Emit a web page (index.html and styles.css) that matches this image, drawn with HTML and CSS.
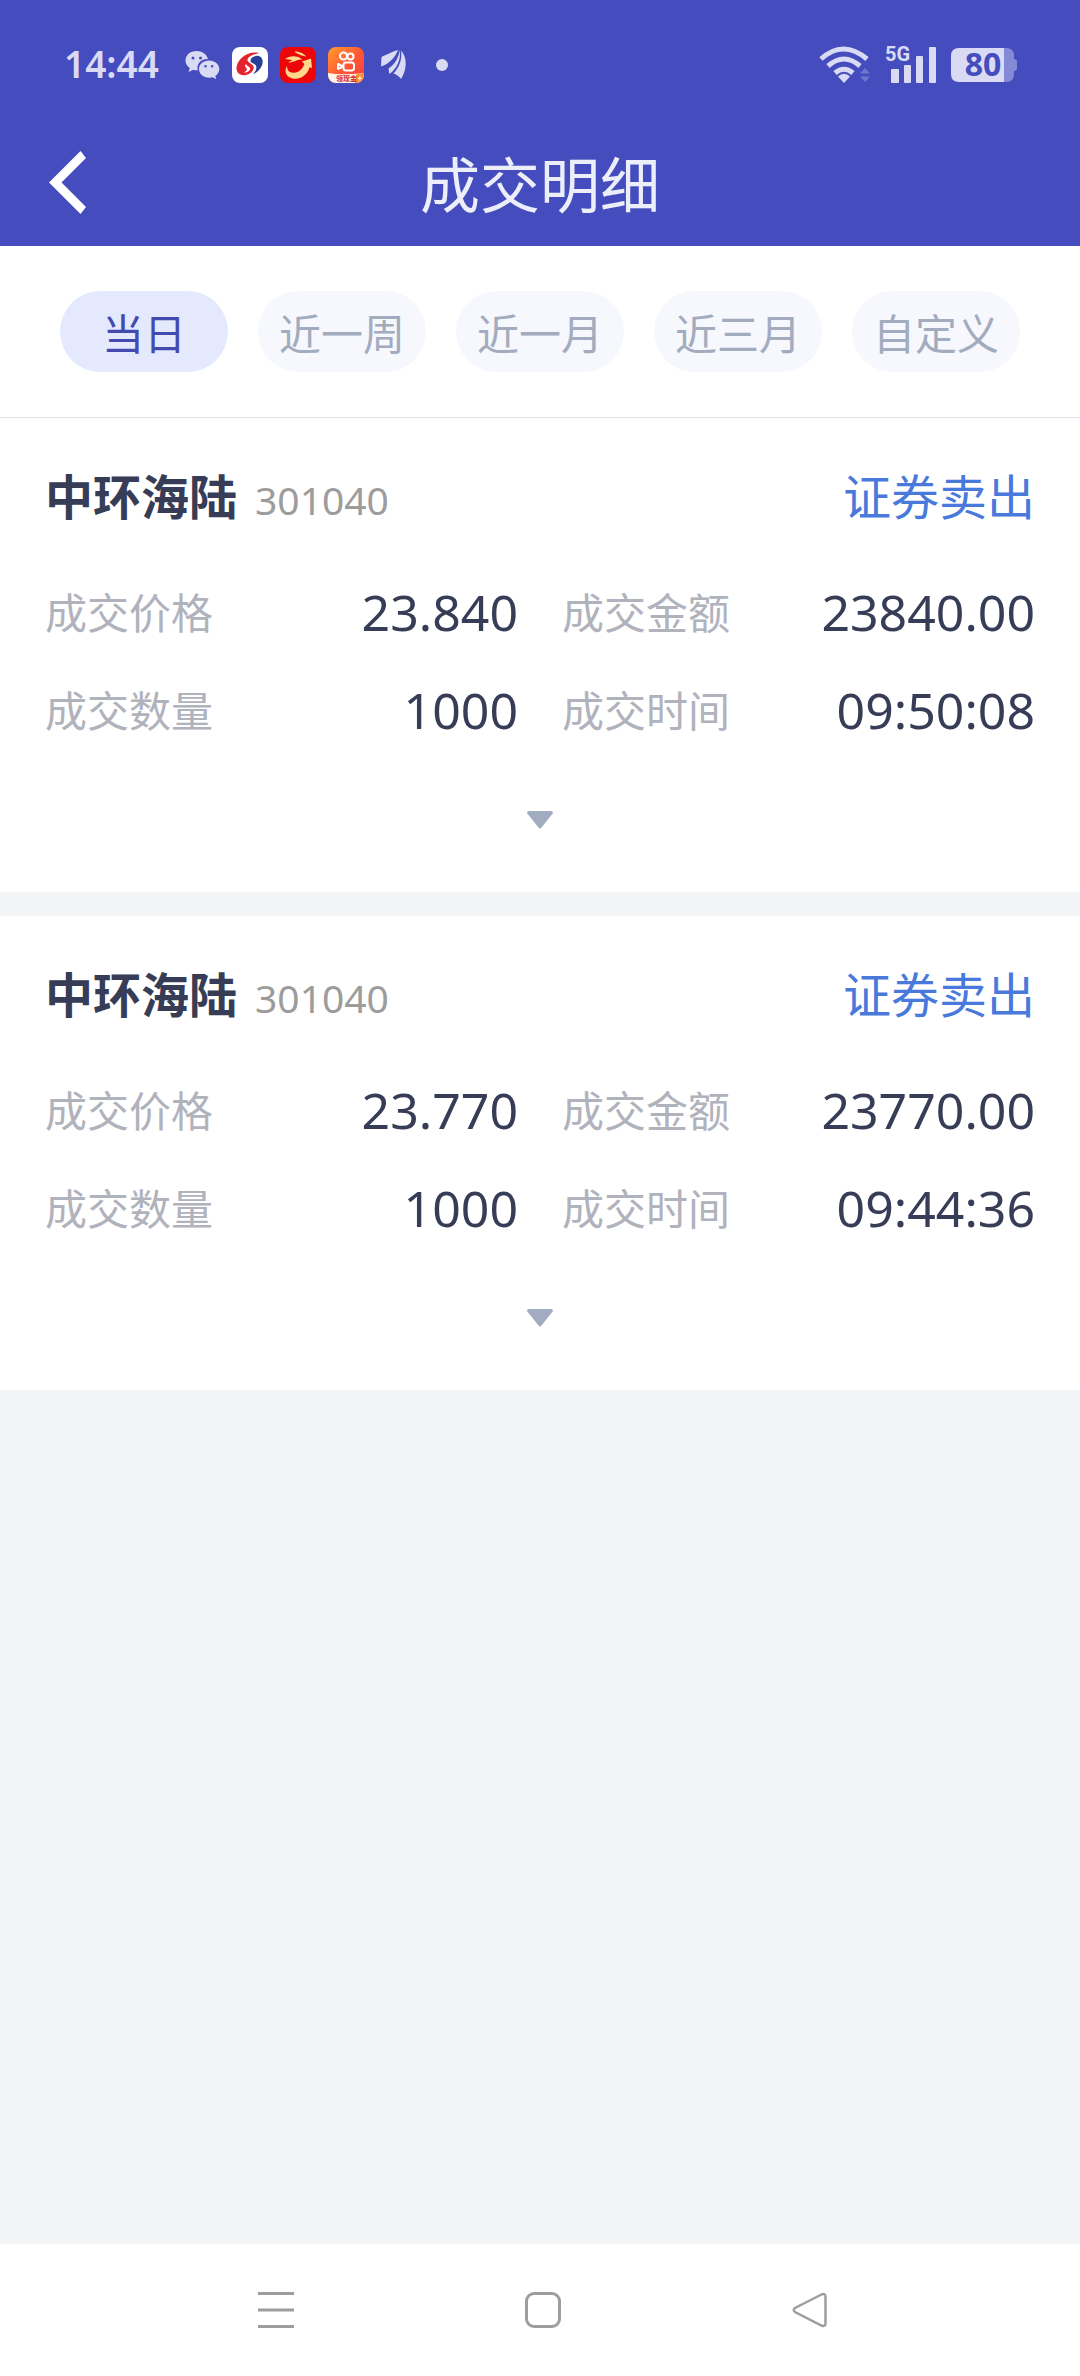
FILE: index.html
```html
<!DOCTYPE html>
<html lang="zh-CN">
<head>
<meta charset="utf-8">
<meta name="viewport" content="width=device-width">
<title>成交明细</title>
<link rel="stylesheet" href="styles.css">
</head>
<body>
<header class="header">
  <div class="status">
    <div class="status-left">
      <span class="clock">14:44</span>
      <svg class="wechat" width="35" height="30" viewBox="0 0 35 30" aria-hidden="true">
        <path fill="#d9dbf4" fill-rule="evenodd" d="M11.500 1C5 1 .5 5.200.5 10.600c0 3.200 1.600 5.700 4.300 7.500L3.600 22l4.600-2.300c1.500.4 3 .6 4.500.5C11.200 13 17 8.600 23 9 21.800 4 17 1 11.500 1zM8 6.500a1.500 1.500 0 1 1 0 3 1.500 1.500 0 0 1 0-3zm7.500 0a1.500 1.500 0 1 1 0 3 1.500 1.500 0 0 1 0-3z"/>
        <path fill="#d9dbf4" fill-rule="evenodd" d="M24 10.500c-5.700 0-10 3.900-10 8.600 0 5 4.600 8.700 10 8.700 1.300 0 2.500-.2 3.700-.5l3.500 2-.9-3.300c2.500-1.700 4-4.100 4-6.900 0-4.800-4.500-8.600-10.300-8.600zM20.500 15a1.300 1.300 0 1 1 0 2.600 1.300 1.300 0 0 1 0-2.600zm6.600 0a1.300 1.300 0 1 1 0 2.600 1.300 1.300 0 0 1 0-2.600z"/>
      </svg>
      <svg class="app" width="36" height="36" viewBox="0 0 36 36" aria-hidden="true">
        <rect width="36" height="36" rx="8" fill="#fff"/>
        <path fill="#e3242f" d="M27 6C16 3.500 5 12 4.500 21c-.2 5 4 8.300 9.500 7 5-1.200 8.500-5 7.500-8.500-.7-2.300-3.500-3-5.500-5-1.600-1.800.5-4.600 3.500-6 2.700-1.300 5.300-1.500 7.500-2.500zM14 17c1 2.500 4.500 2.600 4.200 5-.4 2-3.400 3.700-6.200 3.500 2.500-1.500 4-3.500 1.500-5.500-1-1-.5-2 .5-3z"/>
        <path fill="#273f96" d="M19.500 11c3-2.500 7.500-3 9.700-.5 3.800 4.500-.2 13.500-7.700 16.500 2.600-3.500 3.700-6.500 2.200-8.800-1.500-2-4.500-2.200-5.400-4 .3-1.200.6-2.200 1.200-3.200z"/>
      </svg>
      <svg class="app" width="36" height="36" viewBox="0 0 36 36" aria-hidden="true">
        <rect width="36" height="36" rx="8" fill="#ec0609"/>
        <path fill="#ffd98a" d="M14.500 4.500c4.500.2 9 1.200 11.500 5-3.500-1-8-1.500-11.500-5zM5 12c5-3.500 12-4 18 .7C17 12 14 16 8 15.300 10 14.700 11 14 12 13.300 10 12.500 7.500 12.500 5 12z"/>
        <path fill="#ffd98a" d="m22 14.500 9-3 1 9.500-2.500-.8C27.500 28 20 33 12.500 31.500c-6-1.200-9-7-5.500-12.500 0 4.500 2.500 7 7 6.700C19 25.500 22.500 22 24.500 17z"/>
      </svg>
      <svg class="app" width="36" height="36" viewBox="0 0 36 36" aria-hidden="true">
        <defs>
          <linearGradient id="ks" x1="0" y1="0" x2="1" y2="1"><stop offset="0" stop-color="#ff9f2e"/><stop offset=".5" stop-color="#ff5a35"/><stop offset="1" stop-color="#f63a45"/></linearGradient>
          <clipPath id="ksclip"><rect width="36" height="36" rx="8"/></clipPath>
        </defs>
        <g clip-path="url(#ksclip)">
          <rect width="36" height="36" fill="url(#ks)"/>
          <path fill="#fff4e8" d="M0 26q14 2.500 36 0v10H0z"/>
          <path fill="#ff8b28" d="M28 27.500 36 26v10h-9z"/>
          <path fill="#fff" d="m32.500 28-3 4h2l-1.500 3 4-4.500h-2z"/>
        </g>
        <g fill="none" stroke="#fff" stroke-width="2"><circle cx="15.500" cy="9" r="3.500"/><circle cx="22.500" cy="9.500" r="3"/><rect x="15.500" y="15.500" width="10.500" height="8" rx="2.500"/><path d="m15 19.500-5-2.500v5z" stroke-linejoin="round"/></g>
        <text class="app-tag" x="8" y="34">领现金</text>
      </svg>
      <svg class="wing" width="28" height="32" viewBox="0 0 28 32" aria-hidden="true">
        <path fill="#d9dbf4" d="M18 1C11 3 5 6.500 1.500 8L1 17.500C8 15.500 15 9 18 1zM19.500 1C19 9 14 16 8.500 19.500l.8 5.500C17 20 21.500 9.500 19.500 1zM21 1.500c1.500 9-2 17-7.500 23 2.500.8 5.500 2.500 7.500 5.500C26.500 22 28 8.500 21 1.500z"/>
      </svg>
      <span class="dot"></span>
    </div>
    <div class="status-right">
      <svg width="54" height="38" viewBox="0 0 54 38" aria-hidden="true">
        <g fill="none" stroke="#d9dbf4" stroke-width="5"><path d="M2 13q22-20 46 0"/><path d="M9 20q16-14 32 0"/><path d="M16 27q9-7.500 18 0"/></g>
        <path fill="#d9dbf4" d="M25 37l-6-6.500q6-5.500 12 0z"/>
        <path fill="#7177cf" d="m46 22 5 5.500H41zM46 36l5-5.500H41z"/>
      </svg>
      <svg width="54" height="48" viewBox="0 -5 54 48" aria-hidden="true">
        <text class="net" x="0" y="15">5G</text>
        <g fill="#d9dbf4"><rect x="6" y="23" width="8" height="14" rx="1"/><rect x="19" y="19" width="7" height="18" rx="1"/><rect x="31" y="10" width="7" height="27" rx="1"/><rect x="44" y="1" width="7" height="36" rx="1"/></g>
      </svg>
      <svg width="66" height="54" viewBox="0 -10 66 54" aria-hidden="true">
        <path fill="#858ad6" d="M53 0h2q8 0 8 8v3q3 0 3 3v6q0 3-3 3v3q0 8-8 8h-2z"/>
        <path fill="#d9dbf4" d="M8 0h45v34H8q-8 0-8-8V8q0-8 8-8z"/>
        <text class="charge" x="32" y="28">80</text>
      </svg>
    </div>
  </div>
  <div class="titlebar">
    <button class="back" type="button" aria-label="返回">
      <svg width="38" height="64" viewBox="0 0 38 64" aria-hidden="true"><path fill="#fff" d="M31.500 0 37 7 12.500 31.500 37 56l-5.500 7L0 31.500z"/></svg>
    </button>
    <h1 class="title">成交明细</h1>
  </div>
</header>

<nav class="filters" aria-label="日期范围">
  <button class="chip chip-active" type="button" aria-pressed="true">当日</button>
  <button class="chip" type="button">近一周</button>
  <button class="chip" type="button">近一月</button>
  <button class="chip" type="button">近三月</button>
  <button class="chip" type="button">自定义</button>
</nav>

<main class="list">
  <article class="card">
    <div class="card-head">
      <h2 class="name">中环海陆</h2><span class="code">301040</span><span class="side">证券卖出</span>
    </div>
    <dl class="fields">
      <div class="field"><dt>成交价格</dt><dd>23.840</dd></div>
      <div class="field"><dt>成交金额</dt><dd>23840.00</dd></div>
      <div class="field"><dt>成交数量</dt><dd>1000</dd></div>
      <div class="field"><dt>成交时间</dt><dd>09:50:08</dd></div>
    </dl>
    <button class="expand" type="button" aria-label="展开">
      <svg width="26" height="18" viewBox="0 0 26 18" aria-hidden="true"><path fill="#a2acc0" d="M1.500 0h23q2.500 1 .8 3L14.500 16.500q-1.500 1.800-3 0L.7 3Q-1 1 1.500 0z"/></svg>
    </button>
  </article>
  <article class="card">
    <div class="card-head">
      <h2 class="name">中环海陆</h2><span class="code">301040</span><span class="side">证券卖出</span>
    </div>
    <dl class="fields">
      <div class="field"><dt>成交价格</dt><dd>23.770</dd></div>
      <div class="field"><dt>成交金额</dt><dd>23770.00</dd></div>
      <div class="field"><dt>成交数量</dt><dd>1000</dd></div>
      <div class="field"><dt>成交时间</dt><dd>09:44:36</dd></div>
    </dl>
    <button class="expand" type="button" aria-label="展开">
      <svg width="26" height="18" viewBox="0 0 26 18" aria-hidden="true"><path fill="#a2acc0" d="M1.500 0h23q2.500 1 .8 3L14.500 16.500q-1.500 1.800-3 0L.7 3Q-1 1 1.500 0z"/></svg>
    </button>
  </article>
</main>

<nav class="system-nav" aria-label="系统导航">
  <button type="button" aria-label="最近任务">
    <svg width="36" height="36" viewBox="0 0 36 36" aria-hidden="true"><path stroke="#9e9e9e" stroke-width="3" d="M0 1.500h36M0 18h36M0 34.500h36"/></svg>
  </button>
  <button type="button" aria-label="主屏幕">
    <svg width="36" height="36" viewBox="0 0 36 36" aria-hidden="true"><rect x="1.500" y="1.500" width="33" height="33" rx="7.500" fill="none" stroke="#9e9e9e" stroke-width="3"/></svg>
  </button>
  <button type="button" aria-label="返回">
    <svg width="36" height="36" viewBox="0 0 36 36" aria-hidden="true"><path fill="none" stroke="#9e9e9e" stroke-width="2.500" d="M29.500 2.500 3 16q-2.500 2 0 4l26.500 13.500q4 1.500 4-2V4.500q0-3.500-4-2z"/></svg>
  </button>
</nav>
</body>
</html>
```
FILE: styles.css
```css
* {
  box-sizing: border-box;
}

body {
  margin: 0;
  min-height: 100vh;
  display: flex;
  flex-direction: column;
  background: #f3f4f6;
  color: #373d56;
  font-family: "Noto Sans", "Noto Sans CJK SC", sans-serif;
}

button {
  padding: 0;
  border: 0;
  background: none;
  color: inherit;
  font: inherit;
}

svg {
  display: block;
  flex: none;
}

h1,
h2,
dl,
dd {
  margin: 0;
}

.header {
  background: #444cbe;
}

.status {
  display: flex;
  justify-content: space-between;
  align-items: center;
  height: 126px;
  padding: 4px 63px 0 64px;
}

.status-left,
.status-right {
  display: flex;
  align-items: center;
}

.clock {
  padding-bottom: 2px;
  color: #d9dbf4;
  font-size: 37px;
  font-weight: 600;
  line-height: 40px;
}

.wechat {
  margin-left: 26px;
}

.app {
  margin-left: 12px;
}

.app-tag {
  fill: #d3222a;
  font-family: "Noto Sans CJK SC", sans-serif;
  font-size: 7px;
  font-weight: 700;
}

.wing {
  margin-left: 16px;
}

.dot {
  width: 12px;
  height: 12px;
  margin-left: 28px;
  border-radius: 50%;
  background: #d9dbf4;
}

.status-right {
  gap: 12px;
}

.net {
  fill: #d9dbf4;
  font-family: Roboto, sans-serif;
  font-size: 20px;
  font-weight: 700;
}

.charge {
  fill: #444cbe;
  font-size: 32px;
  font-weight: 700;
  text-anchor: middle;
}

.titlebar {
  display: grid;
  grid-template-columns: 120px 1fr 120px;
  height: 120px;
}

.back {
  padding: 0 0 6px 49px;
}

.title {
  color: #eceefa;
  font-size: 60px;
  font-weight: 400;
  line-height: 118px;
  text-align: center;
}

.filters {
  display: grid;
  grid-template-columns: repeat(5, 1fr);
  gap: 30px;
  padding: 45px 60px;
  border-bottom: 1px solid #e2e3e6;
  background: #fff;
}

.chip {
  height: 81px;
  border-radius: 41px;
  background: #f6f8fd;
  color: #a2acbe;
  font-size: 42px;
}

.chip-active {
  background: #e4e9fe;
  color: #434cae;
}

.list {
  flex: 1;
  display: flex;
  flex-direction: column;
  gap: 24px;
}

.card {
  padding: 43px 45px 12px;
  background: #fff;
}

.card-head {
  display: flex;
  align-items: baseline;
  height: 72px;
  margin-bottom: 31px;
  line-height: 72px;
}

.name {
  font-size: 48px;
  font-weight: 700;
}

.code {
  margin-left: 18px;
  color: #9c9c9c;
  font-size: 39px;
}

.side {
  margin-left: auto;
  color: #4a79dc;
  font-size: 48px;
}

.fields {
  display: grid;
  grid-template-columns: 1fr 1fr;
  column-gap: 44px;
}

.field {
  display: flex;
  justify-content: space-between;
  align-items: center;
  height: 98px;
}

dt {
  padding-bottom: 5px;
  color: #b0b2bc;
  font-size: 42px;
}

dd {
  padding-bottom: 2px;
  font-size: 50px;
}

.expand {
  display: flex;
  justify-content: center;
  align-items: center;
  width: 100%;
  height: 120px;
}

.system-nav {
  display: grid;
  grid-template-columns: repeat(3, 1fr);
  height: 132px;
  padding: 0 137px 0 142px;
  background: #fff;
}

.system-nav button {
  display: flex;
  justify-content: center;
  align-items: center;
}
```
